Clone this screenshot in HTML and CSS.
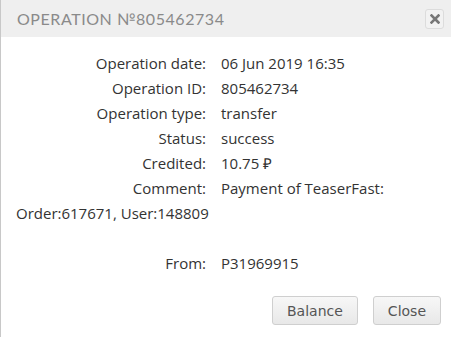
FILE: index.html
```html
<!DOCTYPE html>
<html lang="en">
<head>
    <meta charset="UTF-8">
    <title>Operation №805462734</title>
    <link rel="stylesheet" href="styles.css">
</head>
<body>
    <div class="dialog">
        <div class="dialog-header">
            <h1>Operation №805462734</h1>
            <button class="close-x" title="Close">
                <svg width="10" height="10" viewBox="0 0 10 10">
                    <path d="M1.5 1.5 L8.5 8.5 M8.5 1.5 L1.5 8.5" stroke="#777" stroke-width="2.6" stroke-linecap="square"/>
                </svg>
            </button>
        </div>
        <div class="dialog-body">
            <div class="row"><span class="label">Operation date:</span>06 Jun 2019 16:35</div>
            <div class="row"><span class="label">Operation ID:</span>805462734</div>
            <div class="row"><span class="label">Operation type:</span>transfer</div>
            <div class="row"><span class="label">Status:</span>success</div>
            <div class="row"><span class="label">Credited:</span>10.75 ₽</div>
            <div class="row"><span class="label">Comment:</span>Payment of TeaserFast:<br>Order:617671, User:148809</div>
            <div class="row empty"></div>
            <div class="row"><span class="label">From:</span>P31969915</div>
        </div>
        <div class="dialog-footer">
            <button class="btn">Balance</button>
            <button class="btn">Close</button>
        </div>
    </div>
</body>
</html>
```

FILE: styles.css
```css
html, body {
    margin: 0;
    padding: 0;
    background: #fff;
}
.dialog {
    width: 451px;
    height: 337px;
    box-sizing: border-box;
    border-left: 1px solid #c8c8c8;
    font-family: 'Open Sans', sans-serif;
}
.dialog-header {
    height: 37px;
    background-color: #efefef;
    display: flex;
    align-items: center;
    justify-content: space-between;
    padding: 0 7px 0 16px;
}
.dialog-header h1 {
    margin: 0;
    font-family: 'Lato', sans-serif;
    font-size: 16px;
    font-weight: normal;
    text-transform: uppercase;
    letter-spacing: 0.55px;
    color: #8a8a8a;
}
.close-x {
    width: 19px;
    height: 20px;
    padding: 0;
    border: 1px solid #dcdcdc;
    border-radius: 3px;
    background: #f2f2f2;
    display: flex;
    align-items: center;
    justify-content: center;
}
.dialog-body {
    padding: 14px 0 0 15px;
    font-size: 15px;
    line-height: 25px;
    color: #333;
}
.label {
    display: inline-block;
    width: 190px;
    text-align: right;
    margin-right: 15px;
}
.empty {
    height: 25px;
}
.dialog-footer {
    display: flex;
    justify-content: flex-end;
    gap: 15px;
    padding: 20px 10px 0 0;
}
.btn {
    height: 29px;
    padding: 0 14px;
    font-family: 'DejaVu Sans', Verdana, sans-serif;
    font-size: 14px;
    color: #555;
    background: linear-gradient(#f7f7f7, #e8e8e8);
    border: 1px solid #cfcfcf;
    border-radius: 3px;
}
```
